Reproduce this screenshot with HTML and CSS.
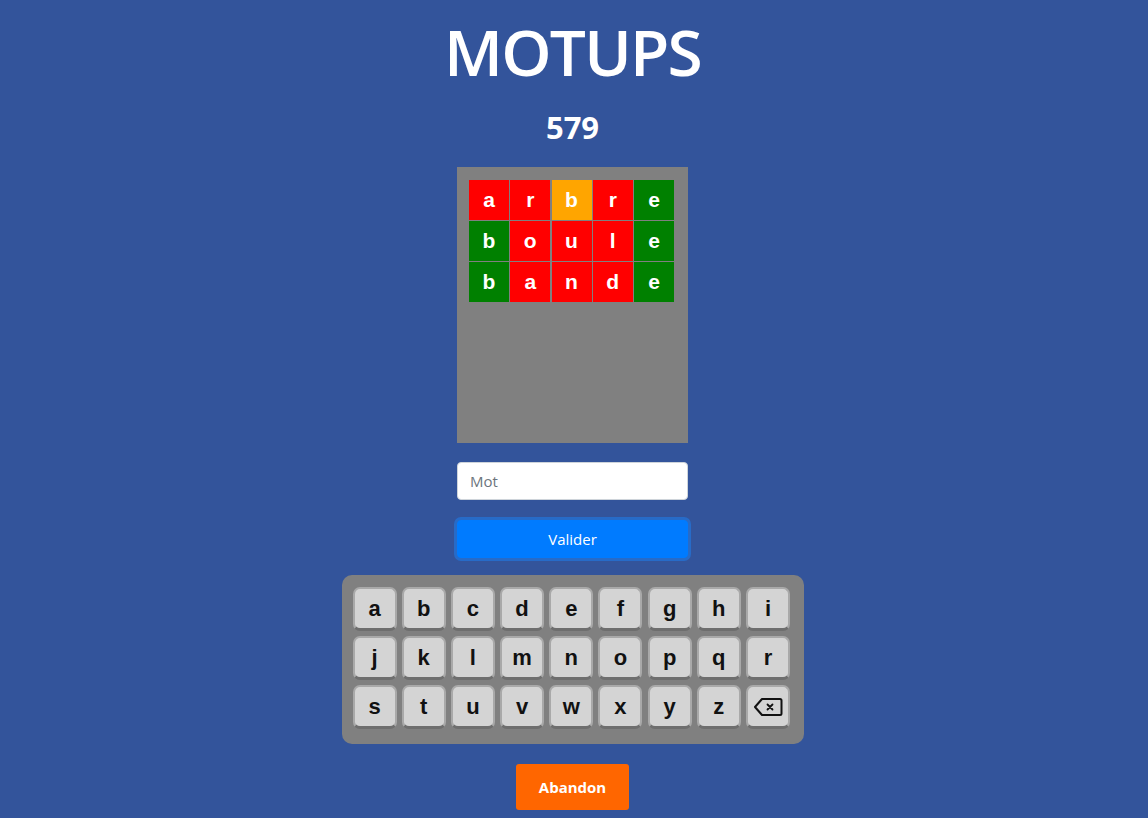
FILE: index.html
```html
<!DOCTYPE html>
<html lang="fr">
<head>
<meta charset="utf-8">
<title>MOTUPS</title>
<link rel="stylesheet" href="styles.css">
</head>
<body>
<main class="app">
  <h1 class="title">MOTUPS</h1>
  <h2 class="number">579</h2>
  <div class="board">
    <div class="grid">
      <div class="cell red">a</div><div class="cell red">r</div><div class="cell orange">b</div><div class="cell red">r</div><div class="cell green">e</div>
      <div class="cell green">b</div><div class="cell red">o</div><div class="cell red">u</div><div class="cell red">l</div><div class="cell green">e</div>
      <div class="cell green">b</div><div class="cell red">a</div><div class="cell red">n</div><div class="cell red">d</div><div class="cell green">e</div>
    </div>
  </div>
  <input class="word-input" type="text" placeholder="Mot">
  <button class="btn-validate">Valider</button>
  <div class="keyboard">
    <button class="key">a</button><button class="key">b</button><button class="key">c</button><button class="key">d</button><button class="key">e</button><button class="key">f</button><button class="key">g</button><button class="key">h</button><button class="key">i</button>
    <button class="key">j</button><button class="key">k</button><button class="key">l</button><button class="key">m</button><button class="key">n</button><button class="key">o</button><button class="key">p</button><button class="key">q</button><button class="key">r</button>
    <button class="key">s</button><button class="key">t</button><button class="key">u</button><button class="key">v</button><button class="key">w</button><button class="key">x</button><button class="key">y</button><button class="key">z</button>
    <button class="key key-back" aria-label="Effacer">
      <svg width="30" height="20" viewBox="0 0 30 20" fill="none" stroke="#111" stroke-width="2" stroke-linejoin="round" stroke-linecap="round">
        <path d="M9 2 H27 a1.5 1.5 0 0 1 1.5 1.5 V16.5 a1.5 1.5 0 0 1 -1.5 1.5 H9 L2 10 Z"/>
        <path d="M14.5 7.5 L19.5 12.5 M19.5 7.5 L14.5 12.5" stroke-width="1.8"/>
      </svg>
    </button>
  </div>
  <button class="btn-abandon">Abandon</button>
</main>
</body>
</html>
```
FILE: styles.css
```css
* { box-sizing: border-box; }

body {
  margin: 0;
  background: #33549b;
  font-family: "Open Sans", "Noto Sans", sans-serif;
  color: #fff;
}

.app {
  display: flex;
  flex-direction: column;
  align-items: center;
  padding-right: 3px;
}

.title {
  margin: 14px 0 0;
  font-size: 64px;
  font-weight: 600;
  line-height: 76px;
  letter-spacing: -1.8px;
}

.number {
  margin: 18px 0 0;
  font-size: 31px;
  font-weight: 700;
  line-height: 38px;
}

.board {
  margin-top: 21px;
  width: 231px;
  height: 276px;
  background: #808080;
  padding: 13px 14px 0 12px;
}

.grid {
  display: grid;
  grid-template-columns: repeat(5, 40px);
  grid-auto-rows: 40px;
  column-gap: 1.25px;
  row-gap: 1px;
}

.cell {
  display: flex;
  align-items: center;
  justify-content: center;
  font-family: "Liberation Sans", Arial, sans-serif;
  font-weight: 700;
  font-size: 21px;
  color: #fff;
}
.red { background: #ff0000; }
.green { background: #008000; }
.orange { background: #ffa500; }

.word-input {
  margin-top: 19px;
  width: 231px;
  height: 38px;
  border: 1px solid #ced4da;
  border-radius: 4px;
  padding: 6px 12px;
  font-family: "Open Sans", sans-serif;
  font-size: 15px;
  color: #495057;
  background: #fff;
}
.word-input::placeholder { color: #6c757d; }

.btn-validate {
  margin-top: 20px;
  width: 231px;
  height: 38px;
  border: 1px solid #007bff;
  border-radius: 4px;
  background: #007bff;
  color: #fff;
  font-family: "Open Sans", sans-serif;
  font-size: 15px;
  box-shadow: 0 0 0 3px rgba(38, 110, 205, 0.9);
}

.keyboard {
  margin-top: 17px;
  width: 462px;
  background: #808080;
  border-radius: 10px;
  padding: 12px 13px 15px 11px;
  display: grid;
  grid-template-columns: repeat(9, 44px);
  grid-auto-rows: 44px;
  column-gap: 5.2px;
  row-gap: 5px;
}

.key {
  display: flex;
  align-items: center;
  justify-content: center;
  padding: 0;
  background: #d4d4d4;
  border: 2px solid #a9a9a9;
  border-bottom: 3px solid #6e6e6e;
  border-radius: 7px;
  font-family: "Liberation Sans", Arial, sans-serif;
  font-weight: 700;
  font-size: 22px;
  color: #111;
}

.btn-abandon {
  margin-top: 20px;
  width: 113px;
  height: 46px;
  border: none;
  border-radius: 3px;
  background: #ff6600;
  color: #fff;
  font-family: "Open Sans", sans-serif;
  font-weight: 700;
  font-size: 15px;
}
```
